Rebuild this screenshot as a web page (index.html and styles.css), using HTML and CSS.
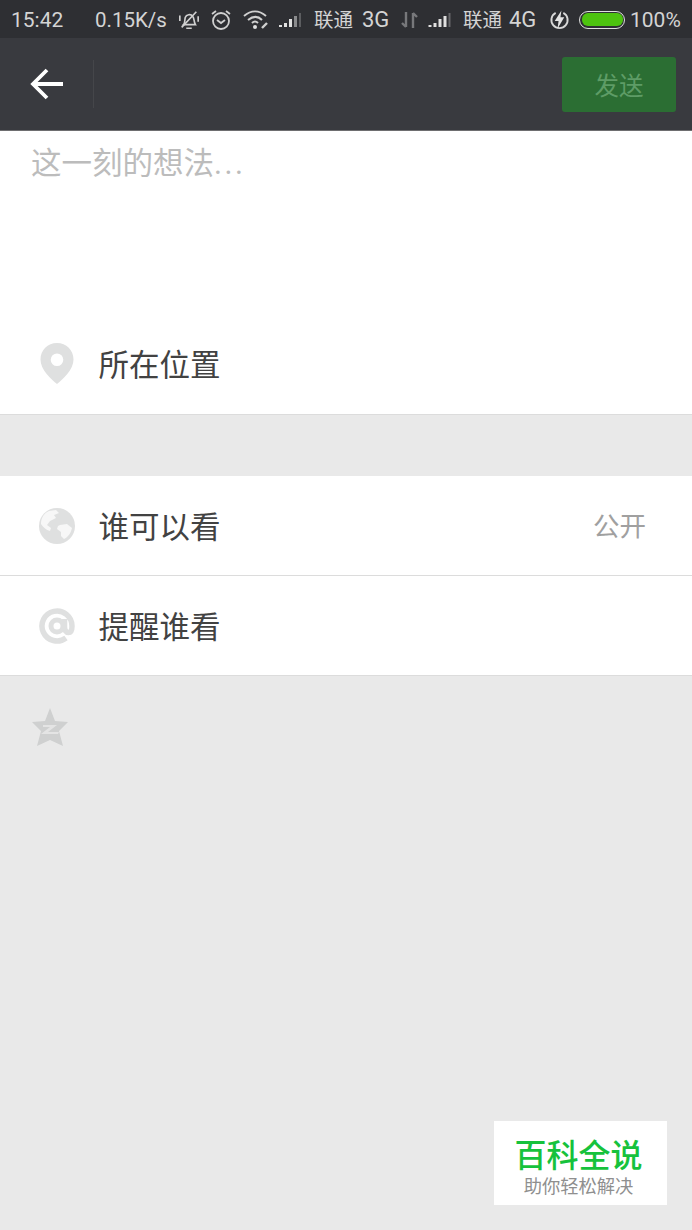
FILE: index.html
```html
<!DOCTYPE html>
<html lang="zh-CN">
  <head>
    <meta charset="UTF-8" />
    <meta name="viewport" content="width=device-width, initial-scale=1.0" />
    <title>发表</title>
    <link rel="stylesheet" href="styles.css">
  </head>
  <body>
    <div class="page">
      <div class="status">
        <span class="time">15:42</span>
        <span class="speed">0.15K/s</span>
        <svg class="st-ico bell" width="22" height="24" viewBox="0 0 24 24" fill="none" stroke="#d0d0d0" stroke-width="1.8">
          <path d="M6 17c2-2 1-5 2-8 1-3 6-4 8-1 2 2 1 6 3 9z" />
          <path d="M9 21h6M4 20L20 3M2 7v6M22 8v6" />
        </svg>
        <svg class="st-ico alarm" width="22" height="22" viewBox="0 0 22 22" fill="none" stroke="#d0d0d0" stroke-width="1.8">
          <circle cx="11" cy="12" r="8" />
          <path d="M7 11l4 3 4-3M2 5l4-3M20 5l-4-3" />
        </svg>
        <svg class="st-ico wifi" width="27" height="20" viewBox="0 0 27 20" fill="none" stroke="#d0d0d0" stroke-width="2">
          <path d="M1 6c7-6 15-6 22 0M5 10c5-4 10-4 14 0M9 13c2-2 4-2 6 0" />
          <circle cx="12" cy="17" r="2" fill="#e0e0e0" stroke="none" />
          <path d="M19 18l5-5" stroke-width="2.400" />
        </svg>
        <svg class="st-ico sig-a" width="24" height="16" viewBox="0 0 24 16">
          <path d="M1 13h3v2H1zM6 11h3v4H6zM11 7h3v8h-3z" fill="#e0e0e0" />
          <path d="M16 4h3v11h-3z" fill="#8a8b8d" />
          <path d="M21 1h2v14h-2z" fill="#5c5d60" />
        </svg>
        <span class="cn cn-a">联通</span>
        <span class="net net-a">3G</span>
        <svg class="st-ico arrows" width="17" height="18" viewBox="0 0 17 18" fill="none" stroke="#77787b" stroke-width="2.400">
          <path d="M5 1v15M1 12l4 4" />
          <path d="M12 17V2M16 6l-4-4" />
        </svg>
        <svg class="st-ico sig-b" width="25" height="16" viewBox="0 0 24 16">
          <path d="M1 13h3v2H1zM6 11h3v4H6zM11 7h3v8h-3zM16 4h3v11h-3z" fill="#e0e0e0" />
          <path d="M21 1h2v14h-2z" fill="#66676a" />
        </svg>
        <span class="cn cn-b">联通</span>
        <span class="net net-b">4G</span>
        <svg class="st-ico bolt" width="21" height="22" viewBox="0 0 22 22" fill="none">
          <path d="M7 3.500a8.500 8.500 0 1 0 8 0" stroke="#d8d8d8" stroke-width="2" />
          <path d="M13 1L6 12h4l-1 8 7-12h-4z" fill="#e4e4e4" />
        </svg>
        <div class="battery"><div class="battery-fill"></div></div>
        <span class="percent">100%</span>
      </div>

      <div class="nav">
        <svg class="back" width="34" height="32" viewBox="0 0 34 32" fill="none" stroke="#fff" stroke-width="3.800">
          <path d="M33 16H4M17 2L3 16l14 14" />
        </svg>
        <div class="divider"></div>
        <button class="send">发送</button>
      </div>

      <div class="compose">
        <div class="placeholder">这一刻的想法<span class="dots">...</span></div>
        <div class="row row-location">
          <svg class="row-ico" width="34" height="42" viewBox="0 0 34 42">
            <path fill-rule="evenodd" d="M17 0C7.600 0 .500 7.200.500 16.500.500 27 11 36 17 41c6-5 16.500-14 16.500-24.500C33.500 7.200 26.400 0 17 0zm0 10.500a6.300 6.300 0 1 1 0 12.600 6.300 6.300 0 0 1 0-12.600z" fill="#dfe0e0" />
          </svg>
          <span class="row-label">所在位置</span>
        </div>
      </div>

      <div class="group">
        <div class="row">
          <svg class="row-ico" width="36" height="36" viewBox="0 0 36 36">
            <circle cx="18" cy="18" r="18" fill="#dfe0e0" />
            <path d="M10 3l7-1 3 3-5 2 2 3-6 3-3 4 4 3-1 3c-4-1-7-4-9-7 0-6 3-11 8-13zM21 17l7-1 5 4c-1 5-4 9-8 11l-3-3v-4l-4-3 1-3z" fill="#f7f7f7" />
          </svg>
          <span class="row-label">谁可以看</span>
          <span class="row-value">公开</span>
        </div>
        <div class="row">
          <svg class="row-ico" width="36" height="36" viewBox="0 0 36 36" fill="none" stroke="#dfe0e0">
            <path d="M27 30A15 15 0 1 1 33 18c0 4-1 6.500-3.500 6.500S25.500 22 25.500 19v-8" stroke-width="5.500" />
            <circle cx="18" cy="18" r="6" stroke-width="5" />
          </svg>
          <span class="row-label">提醒谁看</span>
        </div>
      </div>

      <div class="qzone">
        <svg width="36" height="38" viewBox="0 0 36 38">
          <path d="M18 0l5 13 13 1-9 9 4 15-13-6-13 6 4-15-9-9 13-1z" fill="#cfd0d0" />
          <path d="M11 17h14l-9 7h11l-1 2H9l9-7h-7z" fill="#e4e4e4" />
        </svg>
      </div>

      <div class="badge">
        <div class="badge-title">百科全说</div>
        <div class="badge-sub">助你轻松解决</div>
      </div>
    </div>
  </body>
</html>
```

FILE: styles.css
```css
* {
  margin: 0;
  padding: 0;
  box-sizing: border-box;
}

body {
  background-color: #e9e9e9;
  font-family: "Roboto", "Noto Sans CJK SC", sans-serif;
}

.page {
  position: relative;
  width: 692px;
  height: 1230px;
  overflow: hidden;
}

.status {
  height: 38px;
  background-color: #2e2f33;
  color: #d4d4d4;
  font-size: 21px;
  display: flex;
  align-items: center;
  padding: 1px 0 0 11px;
  white-space: nowrap;
}

.time {
  width: 84px;
}

.speed {
  width: 83px;
  font-size: 20.500px;
}

.st-ico {
  flex: none;
}

.bell {
  margin-right: 10px;
}

.alarm {
  margin-right: 11px;
}

.wifi {
  margin-right: 8px;
}

.sig-a {
  margin-right: 12px;
}

.cn {
  font-size: 19.500px;
  margin-top: -2px;
}

.cn-a {
  width: 48px;
}

.cn-b {
  width: 46px;
}

.net {
  font-size: 22px;
}

.net-a {
  width: 39px;
}

.arrows {
  margin-right: 9px;
}

.sig-b {
  margin-right: 11px;
}

.net-b {
  width: 40px;
}

.bolt {
  margin-right: 9px;
}

.battery {
  flex: none;
  width: 46px;
  height: 18px;
  border: 1.500px solid #e0e0e0;
  border-radius: 9px;
  padding: 1.500px;
  margin-right: 5px;
}

.battery-fill {
  height: 100%;
  background-color: #4dc30f;
  border-radius: 6px;
}

.nav {
  height: 93px;
  background-color: #393a3f;
  border-bottom: 1px solid #6e6e70;
  display: flex;
  align-items: center;
  padding: 0 16px 0 30px;
}

.back {
  flex: none;
}

.divider {
  width: 1px;
  height: 48px;
  background-color: #45464a;
  margin-left: 29px;
}

.send {
  margin: 1px 0 0 auto;
  width: 114px;
  height: 55px;
  border: none;
  border-radius: 3px;
  background-color: #2b6e33;
  color: #5e9c66;
  font-size: 24.500px;
  font-family: "Noto Sans CJK SC", sans-serif;
}

.compose {
  background-color: #fff;
  border-bottom: 1px solid #dcdcdc;
}

.placeholder {
  height: 183px;
  padding: 11px 0 0 31px;
  font-size: 30.500px;
  line-height: 44px;
  color: #bcbcbc;
}

.dots {
  letter-spacing: 2.500px;
}

.row {
  height: 100px;
  display: flex;
  align-items: center;
  padding: 0 46px 0 39px;
  background-color: #fff;
  border-bottom: 1px solid #dcdcdc;
}

.row-location {
  height: 100px;
  border-bottom: none;
}

.row-ico {
  flex: none;
  width: 36px;
}

.row-label {
  margin: 0 0 2px 23.500px;
  font-size: 30.500px;
  color: #424242;
}

.row-value {
  margin: 0 0 2px auto;
  font-size: 26.500px;
  color: #a0a0a0;
}

.group {
  margin-top: 61px;
}

.qzone {
  padding: 32px 0 0 32px;
  line-height: 0;
}

.badge {
  position: absolute;
  left: 494px;
  top: 1121px;
  width: 173px;
  height: 84px;
  background-color: #fff;
  text-align: center;
  padding: 16px 4px 0 0;
}

.badge-title {
  font-size: 32px;
  line-height: 38px;
  font-weight: 500;
  color: #16c23c;
}

.badge-sub {
  font-size: 18.300px;
  line-height: 24px;
  color: #8f8f8f;
}
```
